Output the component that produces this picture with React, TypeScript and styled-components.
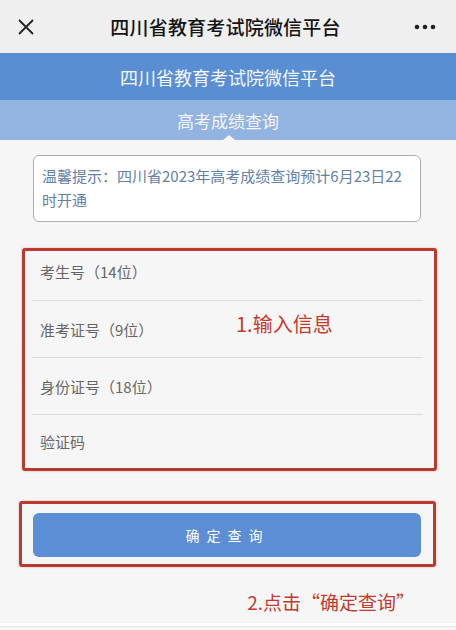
import React from 'react';
import styled, { createGlobalStyle } from 'styled-components';

const GlobalStyle = createGlobalStyle`
    html, body {
        margin: 0;
        padding: 0;
        background: #f6f6f7;
    }
    body {
        font-family: "Noto Sans CJK SC", "Noto Sans", sans-serif;
    }
`;

/**
 * 微信顶部导航
 */
const TopBar = styled.div`
    height: 53px;
    background: #efefef;
    display: flex;
    align-items: center;
    justify-content: space-between;
    padding: 0 18px 0 13px;
    box-sizing: border-box;
`;

const TopTitle = styled.div`
    font-size: 19px;
    font-weight: 500;
    color: #141414;
    letter-spacing: 0.2px;
`;

const IconBox = styled.div`
    width: 26px;
    height: 26px;
    display: flex;
    align-items: center;
    justify-content: center;
`;

/**
 * 页面头部
 */
const Banner = styled.div`
    height: 47px;
    background: #5a8ed3;
    color: #f4f7fc;
    font-size: 18px;
    display: flex;
    align-items: center;
    justify-content: center;
`;

const SubBanner = styled.div`
    height: 40px;
    background: #93b3e1;
    color: #f3f6fb;
    font-size: 17px;
    display: flex;
    align-items: center;
    justify-content: center;
    position: relative;
    &::after {
        content: '';
        position: absolute;
        left: 223px;
        bottom: 0;
        border-left: 6px solid transparent;
        border-right: 6px solid transparent;
        border-bottom: 5px solid #f6f6f7;
    }
`;

const Content = styled.div`
    padding: 15px 0 0;
    display: flex;
    flex-direction: column;
`;

const Notice = styled.div`
    margin: 0 35px 0 33px;
    height: 67px;
    box-sizing: border-box;
    border: 1px solid #a9adb3;
    border-radius: 6px;
    background: #fff;
    padding: 8px 12px 0 8px;
    font-size: 15px;
    line-height: 24px;
    color: #6381a6;
`;

/**
 * 红色标注框
 */
const MarkFrame = styled.div<{ $top: number; $left: number; $right: number }>`
    position: relative;
    margin: ${(p) => p.$top}px ${(p) => p.$right}px 0 ${(p) => p.$left}px;
    border: 3px solid #bb3a2e;
    border-radius: 3px;
    box-shadow: 0 0 2px rgba(220, 90, 80, 0.5);
`;

const FormList = styled.div`
    display: flex;
    flex-direction: column;
    padding: 0 11px 0 7px;
`;

const Row = styled.div<{ $h: number; $pb?: number; $last?: boolean }>`
    height: ${(p) => p.$h}px;
    box-sizing: border-box;
    padding: 0 0 ${(p) => p.$pb || 0}px 8px;
    display: flex;
    align-items: center;
    font-size: 15px;
    color: #666;
    border-bottom: ${(p) => (p.$last ? 'none' : '1px solid #dcdcdc')};
`;

const Annotation = styled.div`
    position: absolute;
    left: 211px;
    top: 58px;
    font-size: 20px;
    color: #c4392c;
`;

const ButtonWrap = styled.div`
    padding: 9px 12px 7px 11px;
`;

const SubmitButton = styled.button`
    width: 100%;
    height: 44px;
    border: none;
    border-radius: 6px;
    background: #5b8ed4;
    color: #fff;
    font-family: inherit;
    font-size: 14px;
    letter-spacing: 7px;
    padding-left: 7px;
`;

const Tip = styled.div`
    margin: 21px 41px 0 0;
    text-align: right;
    font-size: 19px;
    color: #c4392c;
`;

const BottomEdge = styled.div`
    margin-top: 8px;
    height: 3px;
    background: #fff;
    border-bottom: 1px solid #e2e2e2;
`;

const rows = [
    { label: '考生号（14位）', h: 50, pb: 8 },
    { label: '准考证号（9位）', h: 57 },
    { label: '身份证号（18位）', h: 57 },
    { label: '验证码', h: 53, last: true },
];

const App = () => {
    return (
        <>
            <GlobalStyle />
            <TopBar>
                <IconBox>
                    <svg width="18" height="18" viewBox="0 0 18 18">
                        <path d="M2 2 L16 16 M16 2 L2 16" stroke="#222" strokeWidth="1.8" />
                    </svg>
                </IconBox>
                <TopTitle>四川省教育考试院微信平台</TopTitle>
                <IconBox>
                    <svg width="22" height="6" viewBox="0 0 22 6">
                        <circle cx="3" cy="3" r="2.3" fill="#222" />
                        <circle cx="11" cy="3" r="2.3" fill="#222" />
                        <circle cx="19" cy="3" r="2.3" fill="#222" />
                    </svg>
                </IconBox>
            </TopBar>
            <Banner>四川省教育考试院微信平台</Banner>
            <SubBanner>高考成绩查询</SubBanner>
            <Content>
                <Notice>温馨提示：四川省2023年高考成绩查询预计6月23日22时开通</Notice>
                <MarkFrame $top={26} $left={22} $right={19}>
                    <FormList>
                        {rows.map((r) => (
                            <Row key={r.label} $h={r.h} $pb={r.pb} $last={r.last}>
                                {r.label}
                            </Row>
                        ))}
                    </FormList>
                    <Annotation>1.输入信息</Annotation>
                </MarkFrame>
                <MarkFrame $top={30} $left={19} $right={20}>
                    <ButtonWrap>
                        <SubmitButton>确定查询</SubmitButton>
                    </ButtonWrap>
                </MarkFrame>
                <Tip>2.点击“确定查询”</Tip>
                <BottomEdge />
            </Content>
        </>
    );
};

export default App;
